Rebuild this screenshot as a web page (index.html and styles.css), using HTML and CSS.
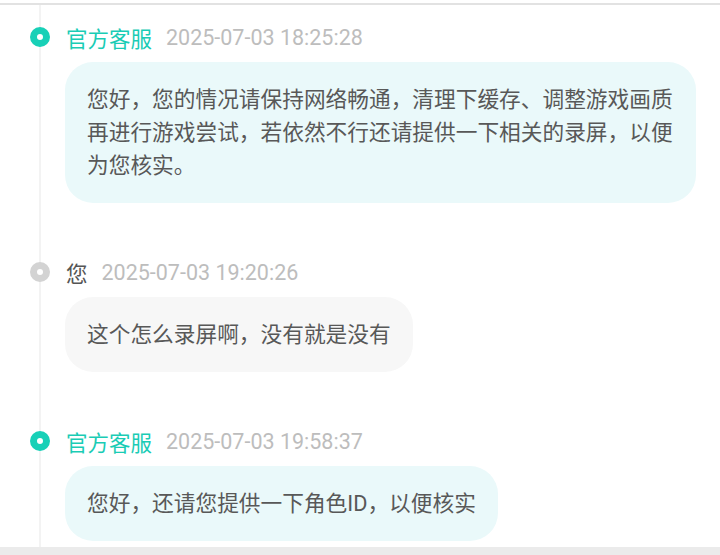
FILE: index.html
```html
<!DOCTYPE html>
<html>
<head>
    <meta charset="utf-8">
    <link rel="stylesheet" href="styles.css">
</head>
<body>
    <div class="page">
        <div class="thread">
            <div class="msg">
                <div class="msg-head">
                    <span class="dot"></span>
                    <span class="name">官方客服</span>
                    <span class="time">2025-07-03 18:25:28</span>
                </div>
                <div class="bubble">您好，您的情况请保持网络畅通，清理下缓存、调整游戏画质再进行游戏尝试，若依然不行还请提供一下相关的录屏，以便为您核实。</div>
            </div>
            <div class="msg mine">
                <div class="msg-head">
                    <span class="dot"></span>
                    <span class="name">您</span>
                    <span class="time">2025-07-03 19:20:26</span>
                </div>
                <div class="bubble">这个怎么录屏啊，没有就是没有</div>
            </div>
            <div class="msg">
                <div class="msg-head">
                    <span class="dot"></span>
                    <span class="name">官方客服</span>
                    <span class="time">2025-07-03 19:58:37</span>
                </div>
                <div class="bubble">您好，还请您提供一下角色ID，以便核实</div>
            </div>
        </div>
    </div>
    <div class="dock"></div>
</body>
</html>
```

FILE: styles.css
```css
html, body {
    margin: 0;
    padding: 0;
    background: #fff;
}

body {
    font-family: Roboto, "Noto Sans CJK SC", sans-serif;
    width: 720px;
    height: 555px;
    overflow: hidden;
}

.page {
    margin-top: 3px;
    border-top: 2px solid #e2e2e2;
    height: 542px;
    overflow: hidden;
}

.thread {
    box-sizing: border-box;
    height: 100%;
    margin-left: 39px;
    border-left: 2px solid #f3f3f3;
    padding: 16px 24px 0;
    display: flex;
    flex-direction: column;
    gap: 53px;
}

.msg-head {
    display: flex;
    align-items: center;
    height: 32px;
    font-size: 21.5px;
}

.dot {
    box-sizing: border-box;
    width: 20px;
    height: 20px;
    border-radius: 50%;
    border: 7px solid #18d0b7;
    background: #fff;
    margin-left: -35px;
    margin-right: 16px;
    flex: none;
}

.name {
    color: #1accb5;
}

.time {
    margin-left: 14px;
    color: #bdbdbd;
}

.bubble {
    box-sizing: border-box;
    width: fit-content;
    max-width: 631px;
    margin-top: 9px;
    padding: 21px 22px;
    border-radius: 28px;
    background: #eaf9fa;
    color: #585858;
    font-size: 21.7px;
    line-height: 33px;
}

.mine .dot {
    border-color: #d3d3d3;
}

.mine .name {
    color: #555;
}

.mine .bubble {
    background: #f7f7f7;
}

.dock {
    height: 8px;
    background: #ebebeb;
}
```
